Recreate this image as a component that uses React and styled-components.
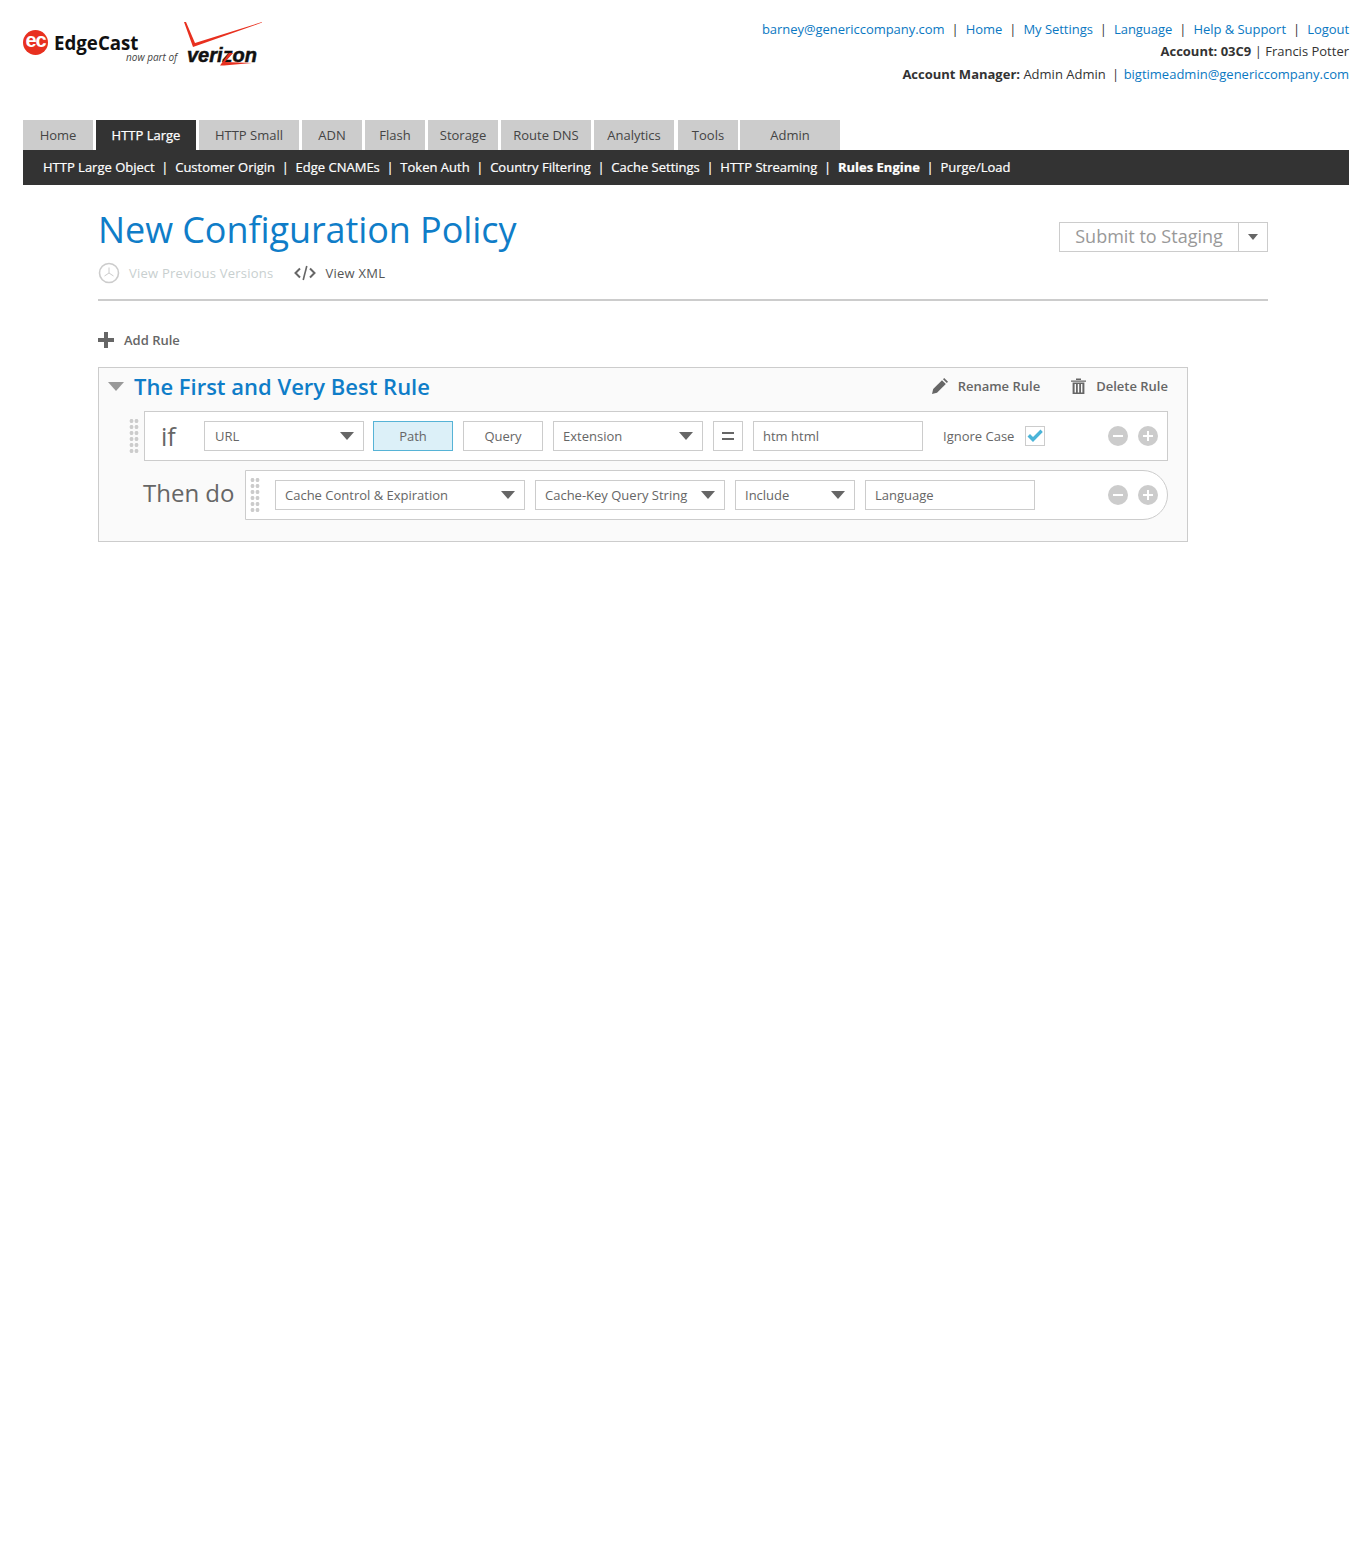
import React from "react";
import styled, { createGlobalStyle } from "styled-components";

const tabs = [
  ["Home", 70],
  ["HTTP Large", 100, true],
  ["HTTP Small", 100],
  ["ADN", 60],
  ["Flash", 60],
  ["Storage", 70],
  ["Route DNS", 90],
  ["Analytics", 80],
  ["Tools", 60, false, 1],
  ["Admin", 100],
];

const subLinks = [
  "HTTP Large Object",
  "Customer Origin",
  "Edge CNAMEs",
  "Token Auth",
  "Country Filtering",
  "Cache Settings",
  "HTTP Streaming",
  "Rules Engine",
  "Purge/Load",
];

const topLinks = ["Home", "My Settings", "Language", "Help & Support", "Logout"];

function Logo() {
  return (
    <LogoWrap>
      <EcBadge>ec</EcBadge>
      <BrandName>EdgeCast</BrandName>
      <NowPart>now part of</NowPart>
      <CheckMark viewBox="0 0 78 27">
        <path d="M0 1 L2 1 L11 22 L78 1 L78 1.6 L9 26 Z" fill="#e8301f" />
      </CheckMark>
      <Verizon>verizon</Verizon>
      <ZSlash viewBox="0 0 32 14">
        <path d="M9 1 L13 1 L5 10 L32 11 L4 13.5 L0 13.5 Z" fill="#e8301f" />
      </ZSlash>
    </LogoWrap>
  );
}

function Caret({ w = 14, h = 8, color = "#666" }) {
  return (
    <svg width={w} height={h} viewBox="0 0 14 8" preserveAspectRatio="none">
      <path d="M0 0 H14 L7 8 Z" fill={color} />
    </svg>
  );
}

function Select({ width, gap = 10, inset = 9, children }) {
  return (
    <SelectBox $width={width} $gap={gap} $inset={inset}>
      {children}
      <Caret />
    </SelectBox>
  );
}

function Round({ plus }) {
  return (
    <RoundBtn>
      <svg width="12" height="12" viewBox="0 0 12 12">
        <rect x="1" y="5" width="10" height="2" fill="#fff" />
        {plus && <rect x="5" y="1" width="2" height="10" fill="#fff" />}
      </svg>
    </RoundBtn>
  );
}

function RowButtons() {
  return (
    <RoundGroup>
      <Round />
      <Round plus />
    </RoundGroup>
  );
}

export default function App() {
  return (
    <Page>
      <GlobalStyle />
      <Header>
        <Logo />
        <UserInfo>
          <TopLinks>
            <a>barney@genericcompany.com</a>
            {topLinks.map((l) => (
              <React.Fragment key={l}>
                <Pipe>|</Pipe>
                <a>{l}</a>
              </React.Fragment>
            ))}
          </TopLinks>
          <InfoLine>
            <b>Account: 03C9</b> | Francis Potter
          </InfoLine>
          <InfoLine $last>
            <b>Account Manager:</b> Admin Admin <TightPipe>|</TightPipe>{" "}
            <a>bigtimeadmin@genericcompany.com</a>
          </InfoLine>
        </UserInfo>
      </Header>

      <Tabs>
        {tabs.map(([label, width, active, nudge]) => (
          <Tab key={label} $width={width} $active={active} $nudge={nudge}>
            {label}
          </Tab>
        ))}
      </Tabs>
      <SubNav>
        {subLinks.map((l, i) => (
          <React.Fragment key={l}>
            {i > 0 && <SubPipe>|</SubPipe>}
            <SubLink $active={l === "Rules Engine"}>{l}</SubLink>
          </React.Fragment>
        ))}
      </SubNav>

      <Main>
        <TitleRow>
          <div>
            <Title>New Configuration Policy</Title>
            <TitleActions>
              <TitleAction $disabled>
                <svg width="22" height="22" viewBox="0 0 22 22" fill="none" stroke="#ccc">
                  <circle cx="11" cy="11" r="9.5" strokeWidth="1.6" />
                  <path d="M11 5.5 V11 L6.5 14 M11 11 L15.5 14" strokeWidth="1" />
                </svg>
                View Previous Versions
              </TitleAction>
              <TitleAction>
                <svg width="22" height="16" viewBox="0 0 22 16" fill="none" stroke="#666" strokeWidth="2">
                  <path d="M6 3.5 L1.5 8 L6 12.5 M16 3.5 L20.5 8 L16 12.5" />
                  <path d="M12.8 1 L9.2 15" strokeWidth="1.6" />
                </svg>
                View XML
              </TitleAction>
            </TitleActions>
          </div>
          <SubmitGroup>
            <SubmitLabel>Submit to Staging</SubmitLabel>
            <SubmitCaret>
              <Caret w={10} h={6} />
            </SubmitCaret>
          </SubmitGroup>
        </TitleRow>

        <AddRule>
          <svg width="16" height="16" viewBox="0 0 16 16">
            <path d="M6 0 H10 V6 H16 V10 H10 V16 H6 V10 H0 V6 H6 Z" fill="#666" />
          </svg>
          Add Rule
        </AddRule>

        <RuleBox>
          <RuleHead>
            <Caret w={16} h={9} color="#999" />
            <RuleName>The First and Very Best Rule</RuleName>
            <RuleAction>
              <svg width="16" height="16" viewBox="0 0 16 16" fill="#666">
                <path d="M0 16 L1.2 11 L10 2.2 L13.8 6 L5 14.8 Z" />
                <path d="M11 1.2 L12.2 0 L16 3.8 L14.8 5 Z" />
              </svg>
              Rename Rule
            </RuleAction>
            <RuleAction>
              <svg width="15" height="16" viewBox="0 0 15 16" fill="#666">
                <path d="M0 2.4 H15 V3.8 H0 Z M5 .4 H10 V2 H5 Z" />
                <path d="M1.6 4.6 H13.4 V16 H1.6 Z M3.6 6 V14.6 H5 V6 Z M6.8 6 V14.6 H8.2 V6 Z M10 6 V14.6 H11.4 V6 Z" fillRule="evenodd" />
              </svg>
              Delete Rule
            </RuleAction>
          </RuleHead>

          <IfRow>
            <Handle />
            <IfPanel>
              <IfWord>if</IfWord>
              <Select width={160} gap={9} inset={10}>URL</Select>
              <Toggle $active>Path</Toggle>
              <Toggle>Query</Toggle>
              <Select width={150}>Extension</Select>
              <EqualBox>
                <svg width="12" height="8" viewBox="0 0 12 8" fill="#666">
                  <rect width="12" height="2" />
                  <rect y="6" width="12" height="2" />
                </svg>
              </EqualBox>
              <TextBox $width={170}>htm html</TextBox>
              <IgnoreLabel>Ignore Case</IgnoreLabel>
              <CheckBox>
                <svg width="16" height="14" viewBox="0 0 16 14">
                  <path d="M0.5 7.5 L3 5 L6 8 L13.5 0.5 L15.8 3 L6 13 Z" fill="#4ab4d8" />
                </svg>
              </CheckBox>
              <RowButtons />
            </IfPanel>
          </IfRow>

          <ThenRow>
            <ThenWord>Then do</ThenWord>
            <ThenPanel>
              <Handle />
              <Select width={250}>Cache Control &amp; Expiration</Select>
              <Select width={190}>Cache-Key Query String</Select>
              <Select width={120}>Include</Select>
              <TextBox $width={170}>Language</TextBox>
              <RowButtons />
            </ThenPanel>
          </ThenRow>
        </RuleBox>
      </Main>
    </Page>
  );
}

const GlobalStyle = createGlobalStyle`
  body {
    margin: 0;
    background: #fff;
    font-family: "Open Sans", "Liberation Sans", sans-serif;
    color: #666;
  }
`;

const Page = styled.div`
  padding: 0 17px 0 23px;
  min-height: 1560px;
  box-sizing: border-box;
`;

const Header = styled.header`
  height: 120px;
  display: flex;
  justify-content: space-between;
`;

const LogoWrap = styled.div`
  position: relative;
  width: 240px;
  height: 70px;
`;

const EcBadge = styled.div`
  position: absolute;
  left: 0;
  top: 30px;
  width: 25px;
  height: 25px;
  border-radius: 50%;
  background: #e8301f;
  color: #fff;
  font: bold 20px/21px "Liberation Sans", sans-serif;
  letter-spacing: -1px;
  text-align: center;
`;

const BrandName = styled.div`
  position: absolute;
  left: 31px;
  top: 30px;
  font-size: 18.7px;
  line-height: 26px;
  font-weight: 700;
  color: #111;
`;

const NowPart = styled.div`
  position: absolute;
  left: 103px;
  top: 50px;
  font-size: 10px;
  line-height: 14px;
  font-style: italic;
  color: #444;
`;

const CheckMark = styled.svg`
  position: absolute;
  left: 161px;
  top: 21px;
  width: 78px;
  height: 27px;
`;

const Verizon = styled.div`
  position: absolute;
  left: 164px;
  top: 43px;
  font: italic 700 20px/24px "Liberation Sans", sans-serif;
  -webkit-text-stroke: 0.5px #111;
  color: #111;
`;

const ZSlash = styled.svg`
  position: absolute;
  left: 197px;
  top: 52px;
  width: 32px;
  height: 14px;
`;

const UserInfo = styled.div`
  padding-top: 18px;
  text-align: right;
  font-size: 13px;
  line-height: 22px;
  color: #333;

  a {
    color: #0a78c2;
  }
  b {
    font-weight: 700;
  }
`;

const InfoLine = styled.div`
  white-space: pre-wrap;
  margin-top: ${(p) => (p.$last ? "1px" : "0")};
`;

const TopLinks = styled(InfoLine)`
  a {
    letter-spacing: -0.04px;
  }
`;

const Pipe = styled.span`
  margin: 0 7px;
  color: #333;
`;

const TightPipe = styled.span`
  margin: 0 1px 0 3px;
  color: #333;
`;

const Tabs = styled.nav`
  display: flex;
  gap: 3px;
  height: 30px;
`;

const Tab = styled.div`
  width: ${(p) => p.$width}px;
  background: ${(p) => (p.$active ? "#333" : "#ccc")};
  color: ${(p) => (p.$active ? "#fff" : "#444")};
  font-size: 13px;
  line-height: 30px;
  text-align: center;
  margin: 0 ${(p) => -(p.$nudge || 0)}px 0 ${(p) => p.$nudge || 0}px;
  ${(p) => p.$active && "-webkit-text-stroke: 0.25px #fff;"}
`;

const SubNav = styled.div`
  height: 35px;
  background: #333;
  padding: 0 0 2px 20px;
  box-sizing: border-box;
  display: flex;
  align-items: center;
  color: #fff;
  font-size: 13px;
  -webkit-text-stroke: 0.2px #fff;
`;

const SubPipe = styled.span`
  margin: 0 6.7px;
`;

const SubLink = styled.span`
  font-weight: ${(p) => (p.$active ? 700 : 400)};
`;

const Main = styled.main`
  width: 1170px;
  margin-left: 75px;
`;

const TitleRow = styled.div`
  display: flex;
  justify-content: space-between;
  height: 116px;
  box-sizing: border-box;
  padding-top: 20px;
  border-bottom: 2px solid #ccc;
`;

const Title = styled.h1`
  margin: 0;
  font-size: 36px;
  line-height: 50px;
  font-weight: 400;
  letter-spacing: -0.08px;
  color: #0f7dc8;
`;

const TitleActions = styled.div`
  display: flex;
  gap: 21px;
  margin-top: 6px;
`;

const TitleAction = styled.div`
  display: flex;
  align-items: center;
  gap: 9px;
  height: 24px;
  font-size: 13px;
  letter-spacing: 0.24px;
  color: ${(p) => (p.$disabled ? "#c8cfcf" : "#555")};
`;

const SubmitGroup = styled.div`
  display: flex;
  height: 30px;
  margin-top: 17px;
  border: 1px solid #ccc;
  box-sizing: border-box;
`;

const SubmitLabel = styled.div`
  width: 178px;
  text-align: center;
  font-size: 18px;
  line-height: 26px;
  color: #999;
`;

const SubmitCaret = styled.div`
  width: 28px;
  border-left: 1px solid #ccc;
  display: flex;
  align-items: center;
  justify-content: center;
`;

const AddRule = styled.div`
  display: flex;
  align-items: center;
  gap: 10px;
  height: 16px;
  margin-top: 31px;
  font-size: 13px;
  font-weight: 600;
  color: #666;
`;

const RuleBox = styled.section`
  width: 1090px;
  height: 175px;
  box-sizing: border-box;
  margin-top: 19px;
  border: 1px solid #ccc;
  background: #fafafa;
  padding-right: 19px;
`;

const RuleHead = styled.div`
  display: flex;
  align-items: center;
  height: 36px;
  padding-left: 9px;
`;

const RuleName = styled.h2`
  margin: 0 auto 0 10px;
  font-size: 22px;
  line-height: 38px;
  font-weight: 600;
  color: #0f7dc8;
`;

const RuleAction = styled.div`
  display: flex;
  align-items: center;
  gap: 10px;
  margin-left: 31px;
  font-size: 13px;
  font-weight: 600;
  color: #666;
`;

const Handle = styled.div`
  width: 10px;
  height: 36px;
  flex: none;
  background-image: radial-gradient(circle, #ccc 1.7px, transparent 2.2px);
  background-size: 5px 6px;
`;

const IfRow = styled.div`
  display: flex;
  align-items: center;
  gap: 5px;
  margin: 7px 0 0 30px;
`;

const IfPanel = styled.div`
  flex: 1;
  height: 50px;
  box-sizing: border-box;
  border: 1px solid #ccc;
  background: #fff;
  display: flex;
  align-items: center;
  padding: 0 9px 0 16px;
`;

const IfWord = styled.div`
  width: 43px;
  font-size: 25px;
  color: #666;
`;

const fieldBase = `
  height: 30px;
  box-sizing: border-box;
  border: 1px solid #ccc;
  background: #fff;
  font-size: 13px;
  color: #666;
  flex: none;
`;

const SelectBox = styled.div`
  ${fieldBase}
  width: ${(p) => p.$width}px;
  display: flex;
  align-items: center;
  justify-content: space-between;
  padding: 0 9px 0 ${(p) => p.$inset}px;
  margin-right: ${(p) => p.$gap}px;
`;

const Toggle = styled.div`
  ${fieldBase}
  width: 80px;
  margin-right: 10px;
  text-align: center;
  line-height: 28px;
  ${(p) => p.$active && "background: #dcf0f8; border-color: #56b3d6;"}
`;

const EqualBox = styled.div`
  ${fieldBase}
  width: 30px;
  margin-right: 10px;
  display: flex;
  align-items: center;
  justify-content: center;
`;

const TextBox = styled.div`
  ${fieldBase}
  width: ${(p) => p.$width}px;
  line-height: 28px;
  padding-left: 9px;
`;

const IgnoreLabel = styled.div`
  margin-left: 20px;
  font-size: 13px;
`;

const CheckBox = styled.div`
  width: 20px;
  height: 20px;
  box-sizing: border-box;
  margin-left: 11px;
  border: 1px solid #ccc;
  display: flex;
  align-items: center;
  justify-content: center;
`;

const RoundGroup = styled.div`
  margin-left: auto;
  display: flex;
  gap: 10px;
`;

const RoundBtn = styled.div`
  width: 20px;
  height: 20px;
  border-radius: 50%;
  background: #ccc;
  display: flex;
  align-items: center;
  justify-content: center;
`;

const ThenRow = styled.div`
  display: flex;
  align-items: center;
  margin: 9px 0 0 44px;
`;

const ThenWord = styled.div`
  width: 102px;
  font-size: 24px;
  line-height: 30px;
  margin-bottom: 5px;
  color: #666;
`;

const ThenPanel = styled.div`
  flex: 1;
  height: 50px;
  box-sizing: border-box;
  border: 1px solid #ccc;
  border-radius: 0 25px 25px 0;
  background: #fff;
  display: flex;
  align-items: center;
  padding: 0 9px 0 4px;

  ${Handle} {
    margin-right: 15px;
  }
`;
